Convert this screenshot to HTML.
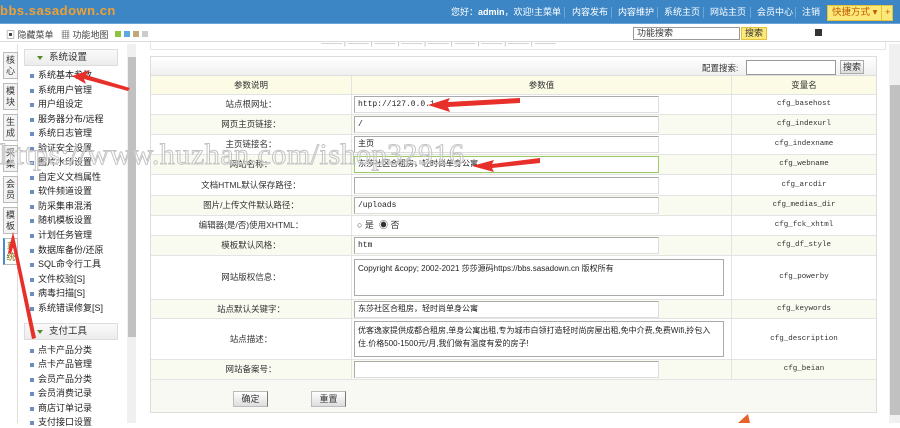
<!DOCTYPE html>
<html><head><meta charset="utf-8"><style>
*{margin:0;padding:0;box-sizing:border-box}
body{width:900px;height:423px;overflow:hidden;background:#fff;font:9px "Liberation Sans","Noto Sans CJK SC",sans-serif;color:#333;position:relative}
.abs{position:absolute}
#hd{left:0;top:0;width:900px;height:24px;background:#3c86c6;border-bottom:1px solid #6aa3d8}
#logo{left:0;top:4px;color:#f0a030;font:bold 13px "Liberation Sans",sans-serif;letter-spacing:0.5px;line-height:14px}
.nv{top:0;line-height:24px;color:#fff;font-size:9px;white-space:nowrap}
.sep{top:7px;width:1px;height:11px;background:#6ea6d6}
#qk{left:827px;top:5px;width:66px;height:16px;background:#fde97a;border:1px solid #e6c13a;color:#c05a00;font-size:9.5px;line-height:14px;padding-left:4px;white-space:nowrap}
.tab{left:3px;width:15px;height:27px;border:1px solid #bbb;background:#f3f3f3;font-size:9px;line-height:11px;text-align:center;color:#333;padding-top:2px}
.mh{left:24px;width:94px;height:17px;border:1px solid #ddd;background:linear-gradient(#fafafa,#ececec);font-size:9.5px;line-height:15px;padding-left:24px;color:#333}
.mh:before{content:"";position:absolute;left:12px;top:6px;border:3px solid transparent;border-top:4px solid #5a8a2a}
.mi{left:30px;font-size:9px;line-height:11px;color:#222;white-space:nowrap}
.mi:before{content:"";display:inline-block;width:4px;height:4px;background:#6a8ec0;margin-right:4px;vertical-align:middle}
.row{left:151px;width:725px;border-bottom:1px solid #e3e3e3}
.c1{position:absolute;left:0;width:201px;text-align:center;font-size:8.5px;border-right:1px solid #e3e3e3;height:100%}
.c3{position:absolute;left:580px;width:145px;text-align:center;font-family:"Liberation Mono",monospace;font-size:7.5px;border-left:1px solid #e3e3e3;height:100%}
.inp{position:absolute;left:203px;width:305px;height:17px;border:1px solid #aaa;border-right-color:#ddd;border-bottom-color:#ddd;background:#fff;font-family:"Liberation Mono","Noto Sans CJK SC",monospace;font-size:8px;padding-left:3px;line-height:15px;color:#222}
.ta{position:absolute;left:203px;width:370px;border:1px solid #aaa;background:#fff;font-size:8px;padding:2px 3px;line-height:13px;color:#222}
.btn{position:absolute;top:10px;width:35px;height:16px;background:linear-gradient(#fff,#ddd);border:1px solid #bbb;border-right-color:#777;font-size:9px;text-align:center;line-height:14px}
</style></head><body>
<div id="hd" class="abs"></div>
<div id="logo" class="abs">bbs.sasadown.cn</div>
<div class="nv abs" style="left:451px">您好：<b>admin</b>，欢迎!</div>
<div class="nv abs" style="left:534px">主菜单</div><div class="sep abs" style="left:564px"></div>
<div class="nv abs" style="left:572px">内容发布</div><div class="sep abs" style="left:611px"></div>
<div class="nv abs" style="left:618px">内容维护</div><div class="sep abs" style="left:657px"></div>
<div class="nv abs" style="left:664px">系统主页</div><div class="sep abs" style="left:703px"></div>
<div class="nv abs" style="left:710px">网站主页</div><div class="sep abs" style="left:750px"></div>
<div class="nv abs" style="left:757px">会员中心</div><div class="sep abs" style="left:795px"></div>
<div class="nv abs" style="left:802px">注销</div>
<div id="qk" class="abs">快捷方式 ▾ <span style="border-left:1px solid #e6c13a;padding-left:3px;position:absolute;left:53px">+</span></div>
<div class="abs" style="left:6px;top:28px;font-size:9px;color:#444">▣ 隐藏菜单 &nbsp;&nbsp;▦ 功能地图</div>
<div class="abs" style="left:115px;top:31px;width:6px;height:6px;background:#8cc53c"></div>
<div class="abs" style="left:124px;top:31px;width:6px;height:6px;background:#5aa9e0"></div>
<div class="abs" style="left:133px;top:31px;width:6px;height:6px;background:#c0a878"></div>
<div class="abs" style="left:142px;top:31px;width:6px;height:6px;background:#ccc"></div>
<div class="abs" style="left:633px;top:27px;width:107px;height:13px;border:1px solid #999;font-size:9px;line-height:11px;padding-left:3px">功能搜索</div>
<div class="abs" style="left:741px;top:27px;width:26px;height:13px;background:#fde97a;border:1px solid #e6c13a;font-size:9px;line-height:11px;text-align:center">搜索</div>
<div class="abs" style="left:815px;top:29px;width:7px;height:7px;background:#333"></div>
<div class="abs" style="left:0;top:41px;width:900px;height:1px;background:#ddd"></div>
<div class="abs" style="left:17px;top:44px;width:1px;height:379px;background:#ddd"></div>
<div class="tab abs" style="top:52px">核<br>心</div>
<div class="tab abs" style="top:83px">模<br>块</div>
<div class="tab abs" style="top:114px">生<br>成</div>
<div class="tab abs" style="top:145px">采<br>集</div>
<div class="tab abs" style="top:176px">会<br>员</div>
<div class="tab abs" style="top:207px">模<br>板</div>
<div class="tab abs" style="top:238px;background:#fff;border-left:2px solid #4a8ad0;color:#7a6a00">系<br>统</div>
<div class="mh abs" style="top:49px">系统设置</div>
<div class="mi abs" style="top:70px">系统基本参数</div>
<div class="mi abs" style="top:85px">系统用户管理</div>
<div class="mi abs" style="top:99px">用户组设定</div>
<div class="mi abs" style="top:114px">服务器分布/远程</div>
<div class="mi abs" style="top:128px">系统日志管理</div>
<div class="mi abs" style="top:143px">验证安全设置</div>
<div class="mi abs" style="top:157px">图片水印设置</div>
<div class="mi abs" style="top:172px">自定义文档属性</div>
<div class="mi abs" style="top:186px">软件频道设置</div>
<div class="mi abs" style="top:201px">防采集串混淆</div>
<div class="mi abs" style="top:215px">随机模板设置</div>
<div class="mi abs" style="top:230px">计划任务管理</div>
<div class="mi abs" style="top:245px">数据库备份/还原</div>
<div class="mi abs" style="top:259px">SQL命令行工具</div>
<div class="mi abs" style="top:274px">文件校验[S]</div>
<div class="mi abs" style="top:288px">病毒扫描[S]</div>
<div class="mi abs" style="top:303px">系统错误修复[S]</div>
<div class="mh abs" style="top:323px">支付工具</div>
<div class="mi abs" style="top:345px">点卡产品分类</div>
<div class="mi abs" style="top:359px">点卡产品管理</div>
<div class="mi abs" style="top:374px">会员产品分类</div>
<div class="mi abs" style="top:388px">会员消费记录</div>
<div class="mi abs" style="top:403px">商店订单记录</div>
<div class="mi abs" style="top:417px">支付接口设置</div>
<div class="abs" style="left:127px;top:44px;width:9px;height:379px;background:#f0f0f0"></div>
<div class="abs" style="left:128px;top:57px;width:8px;height:280px;background:#c1c1c1"></div>
<div class="abs" style="left:889px;top:44px;width:11px;height:379px;background:#f0f0f0"></div>
<div class="abs" style="left:890px;top:85px;width:10px;height:330px;background:#c1c1c1"></div>
<div class="abs" style="left:150px;top:42px;width:736px;height:8px;border:1px solid #e6e6e6;border-top:0;font-size:7px;color:#aaa;line-height:4px;padding-left:170px;overflow:hidden;white-space:nowrap">——— | ——— | ——— | ——— | ——— | ——— | ——— | ——— | ———</div>
<div class="abs" style="left:150px;top:56px;width:727px;height:357px;border:1px solid #ddd;background:#f9f9f4"></div>
<div class="abs" style="left:151px;top:57px;width:725px;height:19px;background:linear-gradient(#fff,#f0f0f0);border-bottom:1px solid #ddd"></div>
<div class="abs" style="left:702px;top:62px;font-size:8.5px">配置搜索:</div>
<div class="abs" style="left:746px;top:60px;width:90px;height:15px;border:1px solid #999;background:#fff"></div>
<div class="abs" style="left:840px;top:60px;width:24px;height:14px;border:1px solid #aaa;background:linear-gradient(#fff,#ddd);font-size:9px;text-align:center;line-height:12px">搜索</div>

<div class="row abs" style="top:76px;height:19px;background:#fbfbe6;line-height:18px"><div class="c1">参数说明</div><div style="position:absolute;left:201px;width:379px;text-align:center;font-size:8.5px">参数值</div><div class="c3" style="font-family:'Liberation Sans','Noto Sans CJK SC',sans-serif;font-size:8.5px">变量名</div></div>
<div class="row abs" style="top:95px;height:20px;background:#fff;line-height:19px"><div class="c1">站点根网址：</div><div class="inp" style="top:1px">http://127.0.0.1</div><div class="c3">cfg_basehost</div></div>
<div class="row abs" style="top:115px;height:20px;background:#f9fbf0;line-height:19px"><div class="c1">网页主页链接：</div><div class="inp" style="top:1px">/</div><div class="c3">cfg_indexurl</div></div>
<div class="row abs" style="top:135px;height:20px;background:#fff;line-height:19px"><div class="c1">主页链接名：</div><div class="inp" style="top:1px">主页</div><div class="c3">cfg_indexname</div></div>
<div class="row abs" style="top:155px;height:20px;background:#f9fbf0;line-height:19px"><div class="c1">网站名称：</div><div class="inp" style="top:1px;border-color:#9c6">东莎社区合租房，轻时尚单身公寓</div><div class="c3">cfg_webname</div></div>
<div class="row abs" style="top:175px;height:21px;background:#fff;line-height:20px"><div class="c1">文档HTML默认保存路径：</div><div class="inp" style="top:2px"></div><div class="c3">cfg_arcdir</div></div>
<div class="row abs" style="top:196px;height:20px;background:#f9fbf0;line-height:19px"><div class="c1">图片/上传文件默认路径：</div><div class="inp" style="top:1px">/uploads</div><div class="c3">cfg_medias_dir</div></div>
<div class="row abs" style="top:216px;height:20px;background:#fff;line-height:19px"><div class="c1">编辑器(是/否)使用XHTML：</div><div style="position:absolute;left:206px;font-size:9px">○ 是 &nbsp;◉ 否</div><div class="c3">cfg_fck_xhtml</div></div>
<div class="row abs" style="top:236px;height:20px;background:#f9fbf0;line-height:19px"><div class="c1">模板默认风格：</div><div class="inp" style="top:1px">htm</div><div class="c3">cfg_df_style</div></div>
<div class="row abs" style="top:256px;height:44px;background:#fff;line-height:43px"><div class="c1">网站版权信息：</div><div class="ta" style="top:3px;height:37px">Copyright &amp;copy; 2002-2021 莎莎源码https://bbs.sasadown.cn 版权所有</div><div class="c3">cfg_powerby</div></div>
<div class="row abs" style="top:300px;height:19px;background:#f9fbf0;line-height:18px"><div class="c1">站点默认关键字：</div><div class="inp" style="top:1px">东莎社区合租房，轻时尚单身公寓</div><div class="c3">cfg_keywords</div></div>
<div class="row abs" style="top:319px;height:41px;background:#fff;line-height:40px"><div class="c1">站点描述：</div><div class="ta" style="top:2px;height:36px">优客逸家提供成都合租房,单身公寓出租,专为城市白领打造轻时尚房屋出租,免中介费,免费Wifi,拎包入住.价格500-1500元/月,我们做有温度有爱的房子!</div><div class="c3">cfg_description</div></div>
<div class="row abs" style="top:360px;height:20px;background:#f9fbf0;line-height:19px"><div class="c1">网站备案号：</div><div class="inp" style="top:1px"></div><div class="c3">cfg_beian</div></div>
<div class="abs" style="left:151px;top:381px;width:725px;height:31px;background:#f9f9f4"><div class="btn" style="left:82px">确定</div><div class="btn" style="left:160px">重置</div></div>

<div class="abs" style="left:0;top:138px;font:30px 'Liberation Serif',serif;color:rgba(255,255,255,0.3);-webkit-text-stroke:1px #c4c4c4;letter-spacing:0.5px;white-space:nowrap">https://www.huzhan.com/ishop32916</div>
<svg class="abs" style="left:0;top:0" width="900" height="423">
<polygon fill="#e8302a" points="72,76 90,70 86,75 130,88 128,91 84,79 86,84"/>
<polygon fill="#e8302a" points="428,105 450,98 448,102 520,98 520,103 448,107 450,112"/>
<polygon fill="#e8302a" points="472,166 494,160 492,164 540,158 540,163 492,168 494,172"/>
<polygon fill="#e8302a" points="8,253 13,232 16,245 36,338 32,339 13,247 11,254"/>
<polygon fill="#e8602a" points="738,423 748,414 750,423"/>
</svg>
</body></html>
